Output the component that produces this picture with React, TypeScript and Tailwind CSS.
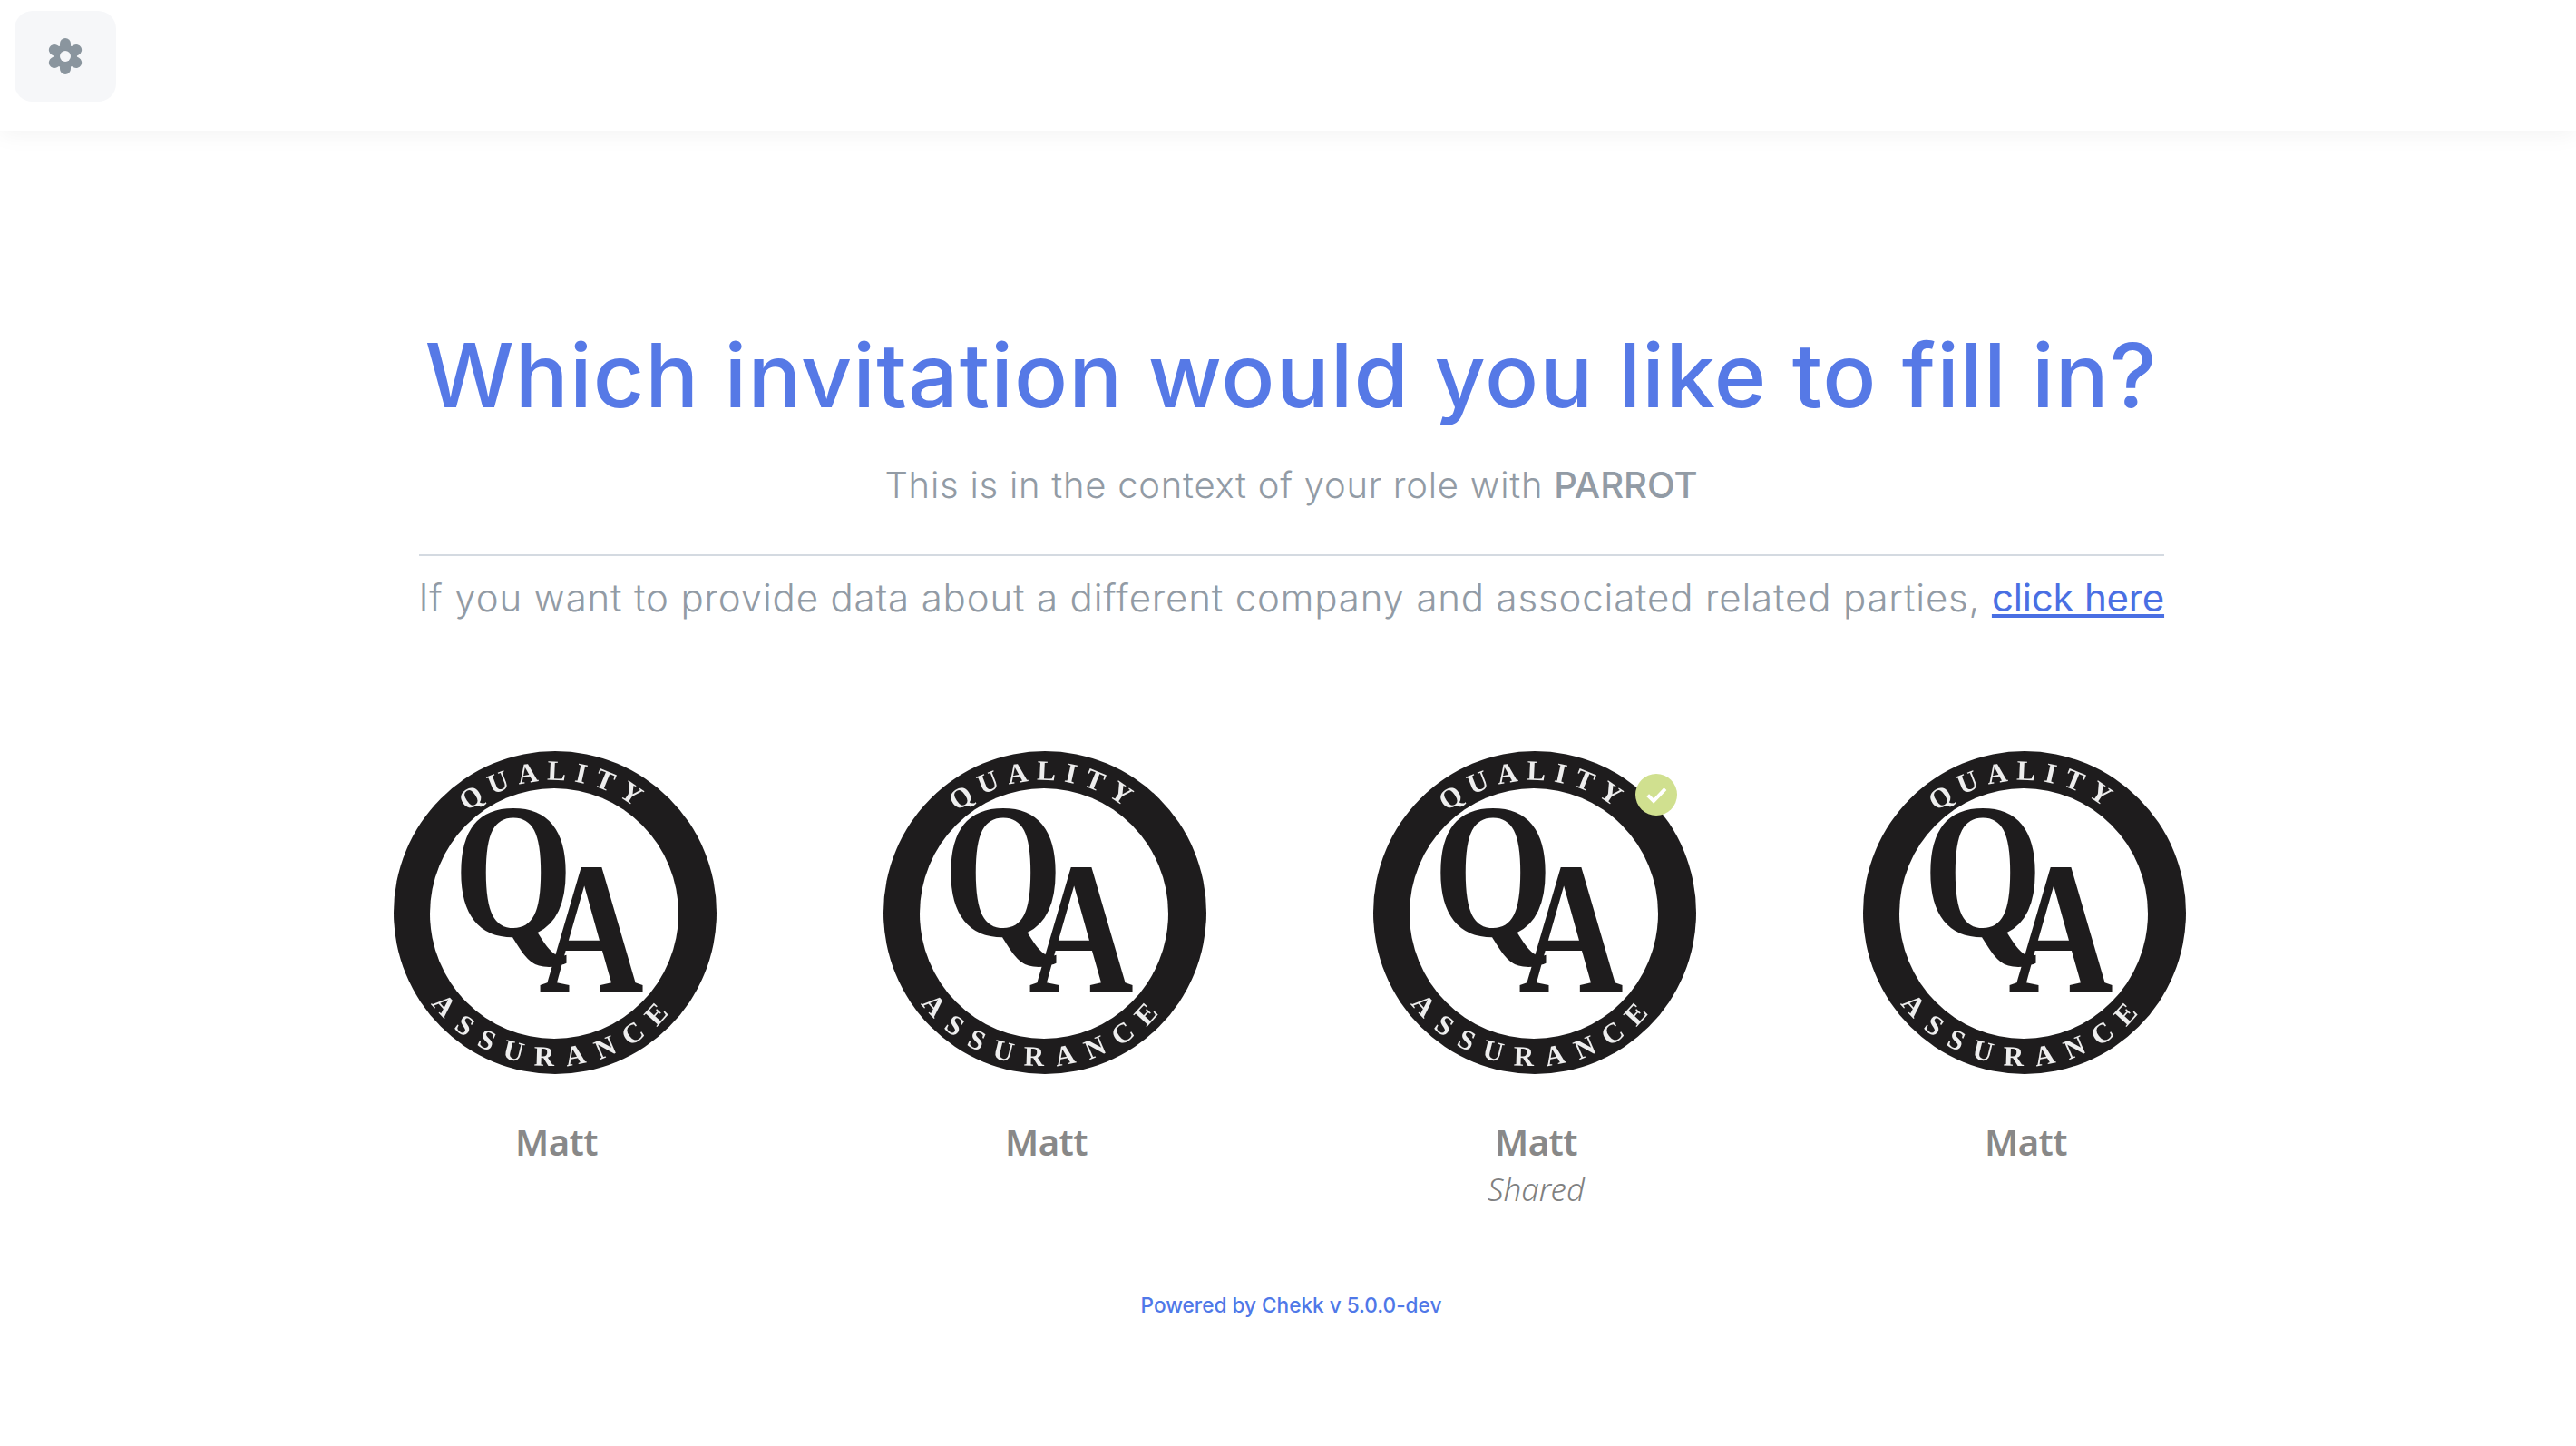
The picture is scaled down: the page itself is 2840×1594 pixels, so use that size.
import { useId } from 'react';

const invitations = [
  { name: 'Matt', shared: false },
  { name: 'Matt', shared: false },
  { name: 'Matt', shared: true },
  { name: 'Matt', shared: false },
];

function GearIcon() {
  const lobes = [0, 60, 120, 180, 240, 300];
  return (
    <svg viewBox="0 0 40 42" className="h-[42px] w-[40px]" fill="#8a959e">
      <circle cx="20" cy="21" r="13" />
      {lobes.map((deg) => (
        <g key={deg} transform={`rotate(${deg} 20 21)`}>
          <rect x="14" y="1" width="12" height="14" rx="6" />
        </g>
      ))}
      <circle cx="20" cy="21" r="6" fill="#f6f7f9" />
    </svg>
  );
}

function QaLogo() {
  const id = useId();
  return (
    <svg viewBox="0 0 360 360" className="h-[360px] w-[360px] blur-[0.5px]">
      <defs>
        <path id={`${id}top`} d="M 30 181 A 147 147 0 0 1 324 181" />
        <path id={`${id}bottom`} d="M 9 181 A 168 168 0 0 0 345 181" />
      </defs>
      <circle cx="178" cy="180" r="178" fill="#1e1c1d" />
      <ellipse cx="177" cy="181" rx="137" ry="138" fill="#ffffff" />
      <text fill="#eeeeee" fontFamily="'Liberation Serif', serif" fontSize="31" fontWeight="700" letterSpacing="9" textAnchor="middle">
        <textPath href={`#${id}top`} startOffset="50%">QUALITY</textPath>
      </text>
      <text fill="#eeeeee" fontFamily="'Liberation Serif', serif" fontSize="31" fontWeight="700" letterSpacing="14" textAnchor="middle">
        <textPath href={`#${id}bottom`} startOffset="50%">ASSURANCE</textPath>
      </text>
      <text
        transform="translate(66 206) scale(0.8 1)"
        fill="#1e1c1d"
        fontFamily="'Liberation Serif', serif"
        fontWeight="700"
        fontSize="212"
      >
        Q
      </text>
      <text
        transform="translate(160 267) scale(0.77 1)"
        fill="#1e1c1d"
        fontFamily="'Liberation Serif', serif"
        fontWeight="700"
        fontSize="208"
      >
        A
      </text>
    </svg>
  );
}

function InvitationCard({ name, shared }: { name: string; shared: boolean }) {
  return (
    <button className="flex w-[540px] flex-col items-center">
      <div className="relative h-[360px] w-[360px]">
        <QaLogo />
        {shared && (
          <div className="absolute left-[289px] top-[27px] flex h-[46px] w-[46px] items-center justify-center rounded-full bg-[#d0e08f]">
            <svg viewBox="0 0 24 24" className="h-[28px] w-[28px]" fill="none" stroke="#ffffff" strokeWidth="3.4">
              <path d="M4 12.5l5.5 5.5L20.5 6.5" />
            </svg>
          </div>
        )}
      </div>
      <div className="mt-[43px] font-['Noto_Sans'] text-[40px] font-semibold leading-[60px] tracking-[-0.5px] text-[#888888]">{name}</div>
      {shared && (
        <div className="font-['Noto_Sans'] text-[35px] font-light italic leading-[44px] text-[#808080]">Shared</div>
      )}
    </button>
  );
}

export default function App() {
  return (
    <div className="min-h-screen bg-white font-['Inter',sans-serif]">
      <header className="h-[144px] bg-white px-[16px] pt-[12px] shadow-[0_4px_24px_rgba(0,0,0,0.05)]">
        <button className="flex h-[100px] w-[112px] items-center justify-center rounded-[20px] bg-[#f6f7f9]">
          <GearIcon />
        </button>
      </header>

      <main className="flex flex-col items-center pl-[7px] pt-[212px]">
        <h1 className="whitespace-nowrap text-center text-[98px] font-medium leading-[116px] tracking-[1.1px] text-[#5679e6]">
          Which invitation would you like to fill in?
        </h1>
        <p className="mt-[35px] whitespace-nowrap text-center text-[40px] font-light leading-[56px] tracking-[0.75px] text-[#929ba5]">
          This is in the context of your role with <span className="font-medium tracking-normal">PARROT</span>
        </p>
        <div className="mt-[48px] h-[2px] w-[1924px] bg-[#d4dae1]" />
        <p className="mt-[18px] w-[1924px] whitespace-nowrap text-center text-[42px] font-light leading-[56px] tracking-[0.83px] text-[#929ba5]">
          If you want to provide data about a different company and associated related parties,{' '}
          <a href="#" className="font-normal tracking-[-0.2px] text-[#4a6fe3] underline">
            click here
          </a>
        </p>

        <div className="mt-[139px] flex h-[560px] w-[2160px] items-start">
          {invitations.map((item, i) => (
            <InvitationCard key={i} name={item.name} shared={item.shared} />
          ))}
        </div>

        <div className="mt-[37px] text-[22.6px] font-medium leading-[32px] text-[#4f78e8]">Powered by Chekk v 5.0.0-dev</div>
      </main>
    </div>
  );
}
